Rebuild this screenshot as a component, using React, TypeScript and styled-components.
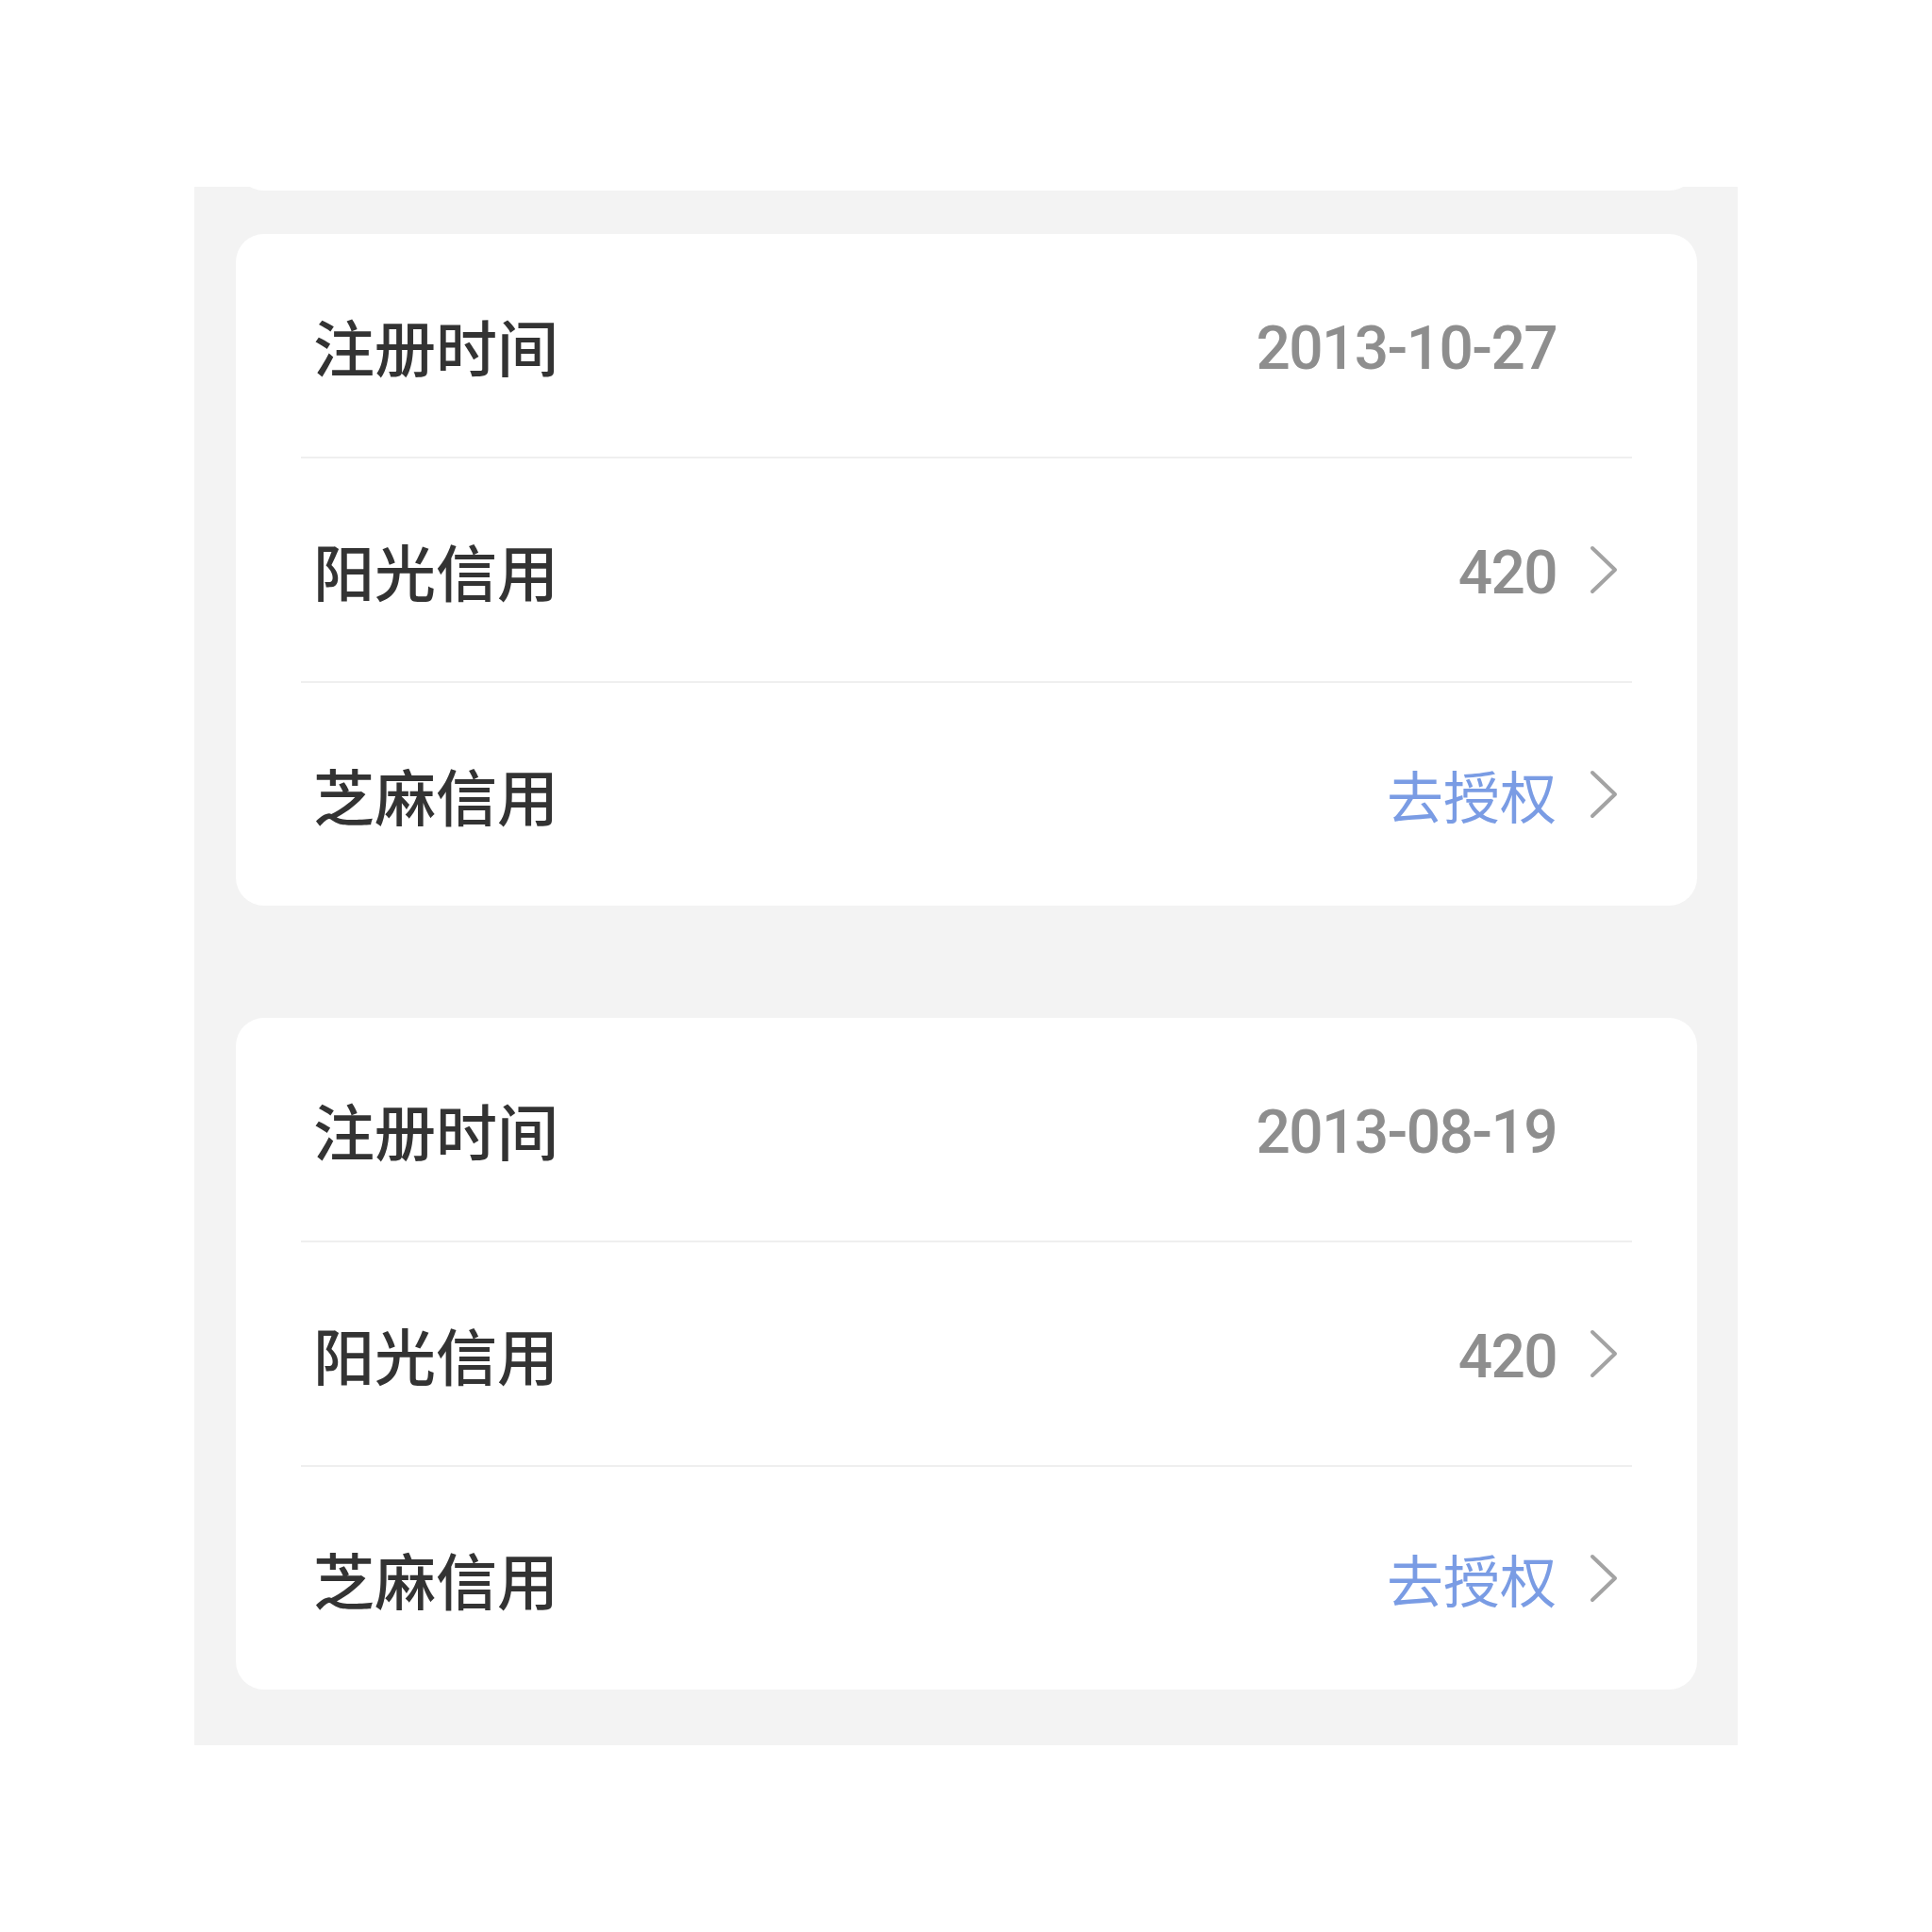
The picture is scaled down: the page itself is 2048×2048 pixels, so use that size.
import React from "react";
import styled, { createGlobalStyle } from "styled-components";

const GlobalStyle = createGlobalStyle`
  html, body {
    margin: 0;
    padding: 0;
    background: #ffffff;
  }
  body {
    font-family: "Noto Sans CJK SC", "Noto Sans", sans-serif;
  }
`;

const Page = styled.div`
  width: 2048px;
  height: 2048px;
  padding: 198px 0 0 206px;
  box-sizing: border-box;
`;

const Panel = styled.div`
  width: 1636px;
  height: 1652px;
  box-sizing: border-box;
  background: #f3f3f3;
  padding: 0 43px 61px 44px;
  overflow: hidden;
  display: flex;
  flex-direction: column;
`;

const PrevCardTail = styled.div`
  flex: none;
  height: 30px;
  margin-top: -26px;
  background: #ffffff;
  border-radius: 0 0 30px 30px;
`;

const Card = styled.div<{ $top: number }>`
  flex: none;
  margin-top: ${(p) => p.$top}px;
  background: #ffffff;
  border-radius: 30px;
  display: flex;
  flex-direction: column;
`;

const Row = styled.div`
  height: 236px;
  display: flex;
  align-items: center;
  justify-content: space-between;
  padding: 0 84px 0 82px;
`;

const Divider = styled.div`
  height: 2px;
  margin: 0 69px;
  background: #efefef;
`;

const Label = styled.span`
  font-family: "Noto Sans CJK SC", sans-serif;
  font-size: 65px;
  font-weight: 500;
  color: #333333;
  line-height: 1;
`;

const Right = styled.div`
  display: flex;
  align-items: center;
  gap: 35px;
`;

const Value = styled.span<{ $link?: boolean }>`
  font-family: ${(p) =>
    p.$link ? `"Noto Sans CJK SC", sans-serif` : `Roboto, "Noto Sans", sans-serif`};
  font-size: ${(p) => (p.$link ? 60 : 64)}px;
  font-weight: ${(p) => (p.$link ? 400 : 500)};
  letter-spacing: ${(p) => (p.$link ? 0 : -1.6)}px;
  padding-top: ${(p) => (p.$link ? 0 : 8)}px;
  color: ${(p) => (p.$link ? "#7a9ce4" : "#8e8e8e")};
  line-height: 1;
`;

const Chevron = styled.svg<{ $hidden?: boolean }>`
  width: 30px;
  height: 52px;
  visibility: ${(p) => (p.$hidden ? "hidden" : "visible")};
`;

type Item = { label: string; value: string; link?: boolean; arrow: boolean };

const Arrow = ({ hidden }: { hidden?: boolean }) => (
  <Chevron $hidden={hidden} viewBox="0 0 30 52" fill="none">
    <path
      d="M3 3 L27 26 L3 49"
      stroke="#a3a3a3"
      strokeWidth="4"
      strokeLinecap="round"
      strokeLinejoin="round"
    />
  </Chevron>
);

const InfoCard = ({ items, top }: { items: Item[]; top: number }) => (
  <Card $top={top}>
    {items.map((it, i) => (
      <React.Fragment key={it.label}>
        {i > 0 && <Divider />}
        <Row>
          <Label>{it.label}</Label>
          <Right>
            <Value $link={it.link}>{it.value}</Value>
            <Arrow hidden={!it.arrow} />
          </Right>
        </Row>
      </React.Fragment>
    ))}
  </Card>
);

const cards: Item[][] = [
  [
    { label: "注册时间", value: "2013-10-27", arrow: false },
    { label: "阳光信用", value: "420", arrow: true },
    { label: "芝麻信用", value: "去授权", link: true, arrow: true },
  ],
  [
    { label: "注册时间", value: "2013-08-19", arrow: false },
    { label: "阳光信用", value: "420", arrow: true },
    { label: "芝麻信用", value: "去授权", link: true, arrow: true },
  ],
];

export default function App() {
  return (
    <>
      <GlobalStyle />
      <Page>
        <Panel>
          <PrevCardTail />
          <InfoCard items={cards[0]} top={46} />
          <InfoCard items={cards[1]} top={119} />
        </Panel>
      </Page>
    </>
  );
}
